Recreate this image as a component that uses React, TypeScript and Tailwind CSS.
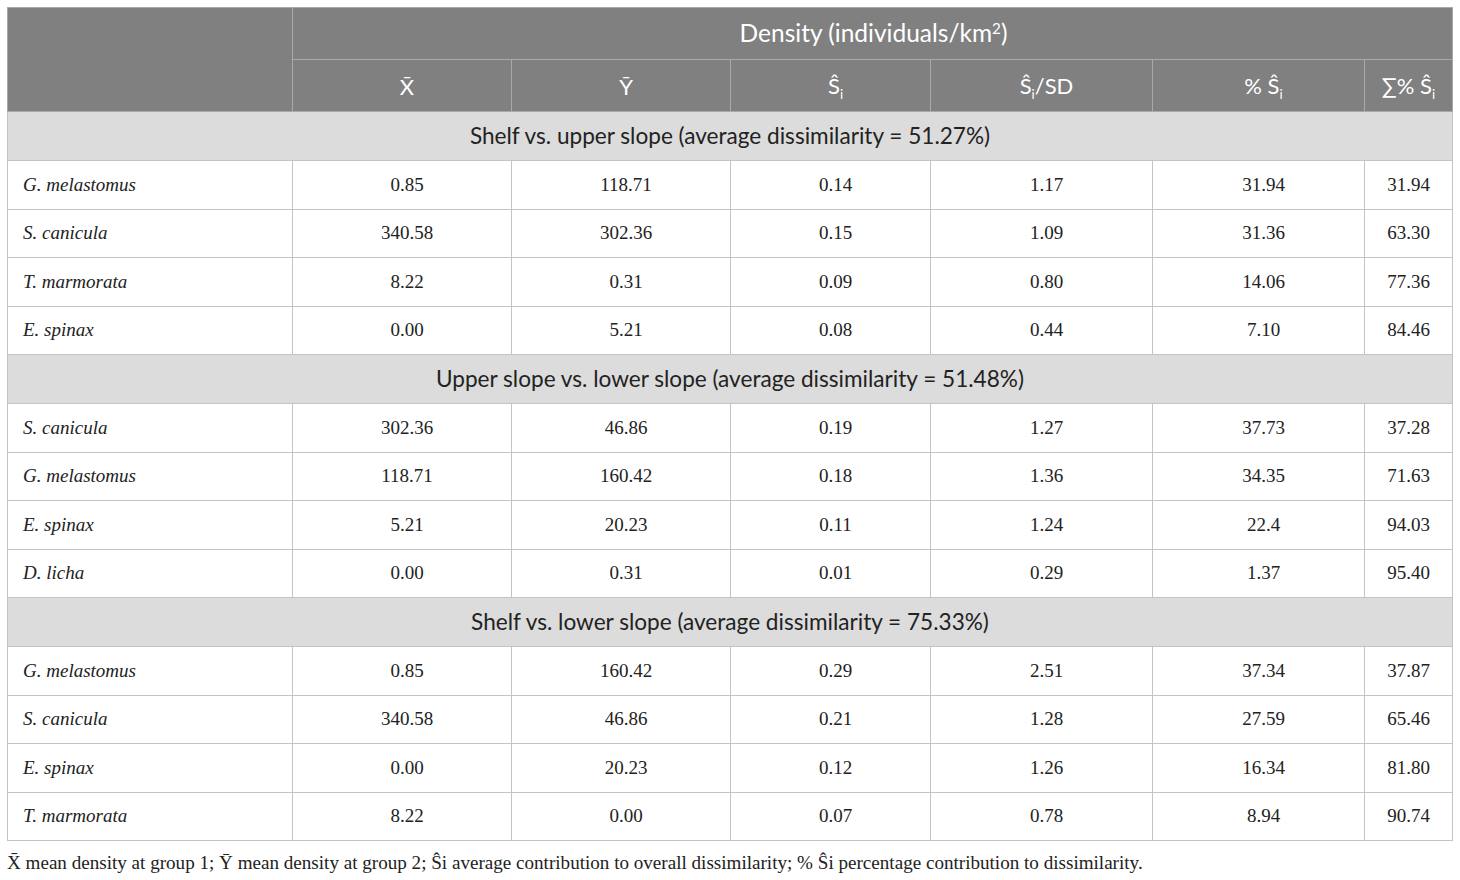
import React from "react";

const sans = { fontFamily: "Lato, 'Open Sans', sans-serif" };
const serif = { fontFamily: "'Liberation Serif', 'Times New Roman', serif" };

const S = () => (
  <span>
    S&#770;<sub className="text-[0.6em] align-baseline relative top-[0.35em]">i</sub>
  </span>
);

type Row = [string, string, string, string, string, string, string];

const sections: { title: string; rows: Row[] }[] = [
  {
    title: "Shelf vs. upper slope (average dissimilarity = 51.27%)",
    rows: [
      ["G. melastomus", "0.85", "118.71", "0.14", "1.17", "31.94", "31.94"],
      ["S. canicula", "340.58", "302.36", "0.15", "1.09", "31.36", "63.30"],
      ["T. marmorata", "8.22", "0.31", "0.09", "0.80", "14.06", "77.36"],
      ["E. spinax", "0.00", "5.21", "0.08", "0.44", "7.10", "84.46"],
    ],
  },
  {
    title: "Upper slope vs. lower slope (average dissimilarity = 51.48%)",
    rows: [
      ["S. canicula", "302.36", "46.86", "0.19", "1.27", "37.73", "37.28"],
      ["G. melastomus", "118.71", "160.42", "0.18", "1.36", "34.35", "71.63"],
      ["E. spinax", "5.21", "20.23", "0.11", "1.24", "22.4", "94.03"],
      ["D. licha", "0.00", "0.31", "0.01", "0.29", "1.37", "95.40"],
    ],
  },
  {
    title: "Shelf vs. lower slope (average dissimilarity = 75.33%)",
    rows: [
      ["G. melastomus", "0.85", "160.42", "0.29", "2.51", "37.34", "37.87"],
      ["S. canicula", "340.58", "46.86", "0.21", "1.28", "27.59", "65.46"],
      ["E. spinax", "0.00", "20.23", "0.12", "1.26", "16.34", "81.80"],
      ["T. marmorata", "8.22", "0.00", "0.07", "0.78", "8.94", "90.74"],
    ],
  },
];

export default function App() {
  return (
    <div className="w-[1460px] h-[880px] bg-white pt-[7px] pl-[7px] overflow-hidden">
      <table className="border-collapse table-fixed w-[1445px] text-[#222]">
        <colgroup>
          <col className="w-[285px]" />
          <col className="w-[219px]" />
          <col className="w-[219px]" />
          <col className="w-[200px]" />
          <col className="w-[222px]" />
          <col className="w-[212px]" />
          <col className="w-[88px]" />
        </colgroup>
        <thead style={sans} className="text-white text-[22px]">
          <tr className="h-[52px] bg-[#808080]">
            <th rowSpan={2} className="border border-[#a9a9a9] font-normal"></th>
            <th colSpan={6} className="border border-[#a9a9a9] font-normal text-center leading-none text-[24.5px] pl-[2px]">
              Density (individuals/km<sup className="text-[0.62em] relative -top-[0.55em] align-baseline">2</sup>)
            </th>
          </tr>
          <tr className="h-[52px] bg-[#808080]">
            <th className="border border-[#a9a9a9] font-normal text-center pl-[10px] pt-[2px]">X&#772;</th>
            <th className="border border-[#a9a9a9] font-normal text-center pl-[10px] pt-[2px]">Y&#772;</th>
            <th className="border border-[#a9a9a9] font-normal text-center pl-[10px]"><S /></th>
            <th className="border border-[#a9a9a9] font-normal text-center pl-[10px]"><S />/SD</th>
            <th className="border border-[#a9a9a9] font-normal text-center pl-[10px]">% <S /></th>
            <th className="border border-[#a9a9a9] font-normal text-center">&sum;% <S /></th>
          </tr>
        </thead>
        <tbody>
          {sections.map((sec) => (
            <React.Fragment key={sec.title}>
              <tr className="h-[49px] bg-[#dcdcdc]">
                <td colSpan={7} style={sans} className="border border-[#c4c4c4] text-center text-[22.6px] text-[#222]">
                  {sec.title}
                </td>
              </tr>
              {sec.rows.map((r, i) => (
                <tr key={i} className="h-[48.5px]" style={serif}>
                  <td className="border border-[#c4c4c4] pl-[15px] italic text-[19px]">{r[0]}</td>
                  {r.slice(1).map((v, j) => (
                    <td
                      key={j}
                      className={
                        j < 5
                          ? "border border-[#c4c4c4] text-center text-[19px] pl-[10px]"
                          : "border border-[#c4c4c4] text-center text-[19px]"
                      }
                    >
                      {v}
                    </td>
                  ))}
                </tr>
              ))}
            </React.Fragment>
          ))}
        </tbody>
      </table>
      <p style={serif} className="mt-[12px] text-[19.1px] text-[#222] leading-none">
        X&#772; mean density at group 1; Y&#772; mean density at group 2; S&#770;i average contribution to overall dissimilarity; % S&#770;i percentage contribution to dissimilarity.
      </p>
    </div>
  );
}
